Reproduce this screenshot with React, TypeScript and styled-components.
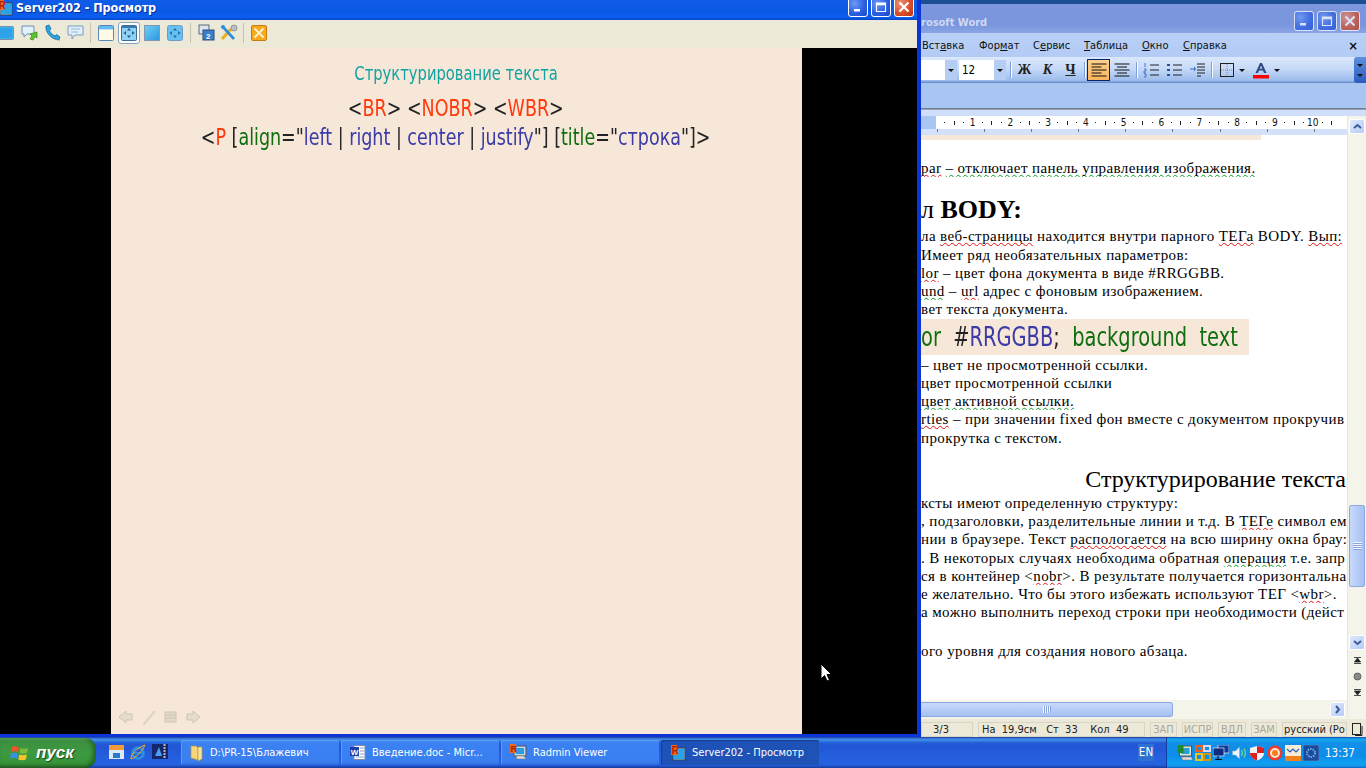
import React from 'react';
import styled, { createGlobalStyle } from 'styled-components';

const GlobalStyle = createGlobalStyle`
  html, body { margin: 0; padding: 0; height: 100%; overflow: hidden; background: #000; }
  #root { height: 100%; }
  * { box-sizing: border-box; }
`;

const UI_FONT = `"DejaVu Sans Condensed", "DejaVu Sans", sans-serif`;
const DOC_FONT = `"Liberation Serif", serif`;

const Screen = styled.div`
  width: 1366px;
  height: 768px;
  display: flex;
  flex-direction: column;
  overflow: hidden;
  position: relative;
`;

const Desktop = styled.div`
  height: 737px;
  display: flex;
`;

/* ---------- viewer window ---------- */

const Viewer = styled.div`
  width: 921px;
  flex: none;
  display: flex;
  flex-direction: column;
  border-right: 4px solid #0a36d8;
  border-bottom: 3px solid #0a36d8;
  background: #000;
`;

const ViewerTitle = styled.div`
  height: 20px;
  flex: none;
  display: flex;
  align-items: flex-start;
  padding-right: 3px;
  background: linear-gradient(180deg, #0f5ee8 0%, #0a58e4 60%, #0d5ff0 85%, #0546c8 100%);
  overflow: hidden;
`;

const TitleIcon = styled.div`
  width: 14px;
  height: 16px;
  margin-left: -3px;
  margin-right: 5px;
  flex: none;
`;

const ViewerCaption = styled.div`
  flex: 1;
  font: bold 12.5px ${UI_FONT};
  line-height: 15px;
  color: #fff;
  text-shadow: 1px 1px 0 #0a2f9c;
  letter-spacing: -0.05px;
`;

const WinButtons = styled.div<{ $faded?: boolean }>`
  display: flex;
  gap: 3px;
  margin-top: ${p => (p.$faded ? '0' : '-3px')};
  opacity: ${p => (p.$faded ? 0.72 : 1)};
`;

const WinBtn = styled.div<{ $close?: boolean }>`
  width: 20px;
  height: 20px;
  border: 1px solid #fff;
  border-radius: 3px;
  display: flex;
  align-items: center;
  justify-content: center;
  background: ${p =>
    p.$close
      ? 'radial-gradient(circle at 30% 30%, #e9937a, #d9502a 55%, #b93412)'
      : 'radial-gradient(circle at 30% 30%, #6f9af5, #2c60e4 55%, #1c48c8)'};
`;

const ViewerTools = styled.div`
  height: 28px;
  flex: none;
  background: #ece9d8;
  display: flex;
  align-items: center;
  padding-bottom: 3px;
`;

const ToolSlot = styled.div<{ $x: number; $on?: boolean }>`
  width: 22px;
  height: 22px;
  flex: none;
  margin-left: ${p => p.$x}px;
  display: flex;
  align-items: center;
  justify-content: center;
  border: ${p => (p.$on ? '1px solid #8aa4c8' : '1px solid transparent')};
  border-radius: 3px;
  background: ${p => (p.$on ? '#fff' : 'transparent')};
`;

const ToolSep = styled.div<{ $x: number }>`
  width: 1px;
  height: 20px;
  flex: none;
  margin-left: ${p => p.$x}px;
  background: #c5c2b0;
`;

const Stage = styled.div`
  flex: 1;
  display: flex;
  justify-content: center;
  padding-right: 4px;
  background: #000;
`;

const Slide = styled.div`
  width: 691px;
  margin-left: -1px;
  background: #f6e7d8;
  display: flex;
  flex-direction: column;
  align-items: center;
  padding-top: 13px;
  font-family: ${UI_FONT};
  filter: blur(0.25px);
`;

const SlideTitle = styled.div`
  font-size: 19.5px;
  line-height: 26px;
  color: #12a3a0;
  margin-bottom: 7px;
  transform: scaleX(0.84);
`;

const SlideLine = styled.div`
  font-size: 22.5px;
  line-height: 29px;
  color: #222;
  white-space: pre;
  transform: scaleX(0.865);
`;

const Tag = styled.span<{ $tone: 'red' | 'green' | 'blue' }>`
  color: ${p => (p.$tone === 'red' ? '#ff3a0c' : p.$tone === 'green' ? '#0f6e0f' : '#3a3aa8')};
`;

const SlideNav = styled.div`
  margin-top: auto;
  align-self: flex-start;
  display: flex;
  gap: 7px;
  padding: 0 0 9px 7px;
`;

/* ---------- word window ---------- */

const Word = styled.div`
  flex: 1;
  min-width: 0;
  display: flex;
  flex-direction: column;
  background: #fff;
`;

const WordTitle = styled.div`
  height: 33px;
  flex: none;
  border-top: 4px solid #1c4f92;
  display: flex;
  align-items: center;
  padding: 5px 6px 0 0;
  background: linear-gradient(180deg, #7c97dc 0%, #7995dd 70%, #8aa5e6 100%);
`;

const WordCaption = styled.div`
  flex: 1;
  font: bold 11px ${UI_FONT};
  color: #cfd9f2;
  padding-top: 2px;
`;

const MenuBar = styled.div`
  height: 24px;
  flex: none;
  display: flex;
  align-items: center;
  background: linear-gradient(180deg, #b9d1f7, #b3cbf5);
  font: 11px ${UI_FONT};
  color: #111;
  padding: 1px 0 0 1px;
  position: relative;
`;

const MenuItem = styled.span<{ $w: number }>`
  width: ${p => p.$w}px;
  flex: none;
  letter-spacing: 0.05px;
  u { text-underline-offset: 1px; }
`;

const MenuClose = styled.span`
  margin-left: auto;
  margin-right: 8px;
  font: bold 13px ${UI_FONT};
  color: #111;
`;

const FormatBar = styled.div`
  height: 26px;
  flex: none;
  display: flex;
  align-items: center;
  background: linear-gradient(180deg, #dbe8fc 0%, #c6d9f8 45%, #9dbdec 90%, #5f86c9 100%);
  position: relative;
`;

const Combo = styled.div<{ $w: number }>`
  width: ${p => p.$w}px;
  height: 20px;
  flex: none;
  margin-right: 2px;
  background: #fff;
  display: flex;
  align-items: center;
  justify-content: space-between;
  font: 11.5px ${UI_FONT};
  padding-left: 3px;
`;

const ComboArrow = styled.div`
  width: 12px;
  height: 20px;
  background: #b6cdf3;
  display: flex;
  align-items: center;
  justify-content: center;
`;

const Caret = styled.span`
  width: 0;
  height: 0;
  border: 3px solid transparent;
  border-top: 3px solid #111;
  border-bottom: none;
  flex: none;
`;

const BarSep = styled.div<{ $wide?: boolean }>`
  width: 1px;
  height: 16px;
  flex: none;
  margin: 0 ${p => (p.$wide ? '3px' : '2px')};
  background: #7f9fd6;
  box-shadow: 1px 0 0 #fff;
`;

const FmtBtn = styled.div<{ $on?: boolean; $w?: number }>`
  width: ${p => p.$w ?? 23}px;
  height: 22px;
  flex: none;
  display: flex;
  align-items: center;
  justify-content: center;
  gap: 5px;
  border: ${p => (p.$on ? '1px solid #0a246a' : '1px solid transparent')};
  background: ${p => (p.$on ? 'linear-gradient(180deg,#fdd08c,#fbb65c)' : 'transparent')};
`;

const FmtLetter = styled.span<{ $italic?: boolean; $under?: boolean }>`
  font: bold 14px ${DOC_FONT};
  font-style: ${p => (p.$italic ? 'italic' : 'normal')};
  text-decoration: ${p => (p.$under ? 'underline' : 'none')};
  color: #222;
`;

const Chevron = styled.div`
  position: absolute;
  right: 0;
  top: 0;
  width: 12px;
  height: 100%;
  background: linear-gradient(180deg, #5f8fdc, #2a5cc0);
  border-radius: 3px 0 0 3px;
  display: flex;
  flex-direction: column;
  align-items: center;
  justify-content: space-around;
  padding: 3px 0;
`;

const TaskBand = styled.div`
  height: 25px;
  flex: none;
  background: #a9c5f2;
`;

const BandEdge = styled.div`
  height: 2px;
  flex: none;
  background: linear-gradient(180deg, #5f6a7a, #aab4c4);
`;

const RulerTop = styled.div`
  height: 6px;
  flex: none;
  background: #cfdffa;
`;

const WordBody = styled.div`
  flex: 1;
  min-height: 0;
  display: flex;
`;

const DocColumn = styled.div`
  flex: 1;
  min-width: 0;
  display: flex;
  flex-direction: column;
`;

const Ruler = styled.div`
  height: 13px;
  flex: none;
  display: flex;
  background: #a9c5f2;
  overflow: hidden;
`;

const RulerWhite = styled.div`
  margin-left: 15px;
  flex: 1;
  display: flex;
  padding-left: 3px;
  background: #fff;
  font: 10px ${UI_FONT};
  color: #111;
  overflow: hidden;
`;

const RulerCell = styled.div`
  width: 37.8px;
  flex: none;
  display: flex;
  align-items: center;
  gap: 8.5px;
  padding-left: 5px;
`;

const RulerDot = styled.span`
  width: 1px;
  height: 1px;
  flex: none;
  background: #222;
`;

const RulerTick = styled.span`
  width: 1px;
  height: 4px;
  flex: none;
  background: #222;
`;

const RulerNum = styled.span`
  width: 8px;
  margin-left: -4px;
  flex: none;
  display: flex;
  justify-content: center;
  white-space: nowrap;
`;

const TabStrip = styled.div`
  height: 6px;
  flex: none;
  background: #d3e1fb;
  background-image: repeating-linear-gradient(90deg, #777 0 1px, transparent 1px 47.1px);
  background-size: 100% 3px;
  background-repeat: no-repeat;
  background-position: 16px 0;
`;

const Page = styled.div`
  flex: 1;
  min-height: 0;
  overflow: hidden;
  background: #fff;
`;

const BeigeStrip = styled.div`
  width: 340px;
  height: 5px;
  background: #f6e7d8;
`;

const Line = styled.div<{ $top?: number }>`
  height: 18.25px;
  margin-top: ${p => p.$top ?? 0}px;
  font: 15px/18.25px ${DOC_FONT};
  letter-spacing: 0.4px;
  color: #000;
  white-space: pre;
  overflow: hidden;
`;

const BodyHeading = styled.div`
  height: 30px;
  margin-top: 18px;
  font: 26px/30px ${DOC_FONT};
  white-space: pre;
  color: #000;
`;

const SectionHeading = styled.div`
  height: 26px;
  margin-top: 19px;
  padding-right: 1px;
  text-align: right;
  font: 24px/26px ${DOC_FONT};
  white-space: pre;
  color: #000;
`;

const Pasted = styled.div`
  width: 328px;
  height: 36px;
  background: #f6e7d8;
  color: #222;
  filter: blur(0.25px);
`;

const PastedText = styled.div`
  width: 410px;
  font: 27px/36px ${UI_FONT};
  white-space: pre;
  transform: scaleX(0.8);
  transform-origin: left center;
`;

const Squiggle = styled.span<{ $tone: 'red' | 'green' }>`
  text-decoration: underline wavy ${p => (p.$tone === 'red' ? '#e01010' : '#0f9a2a')} 1px;
  text-decoration-skip-ink: none;
  text-underline-offset: 1px;
`;

const HScroll = styled.div`
  height: 18px;
  flex: none;
  display: flex;
  align-items: center;
  background: #f5f4ea;
  padding: 1px 2px 0 0;
`;

const HThumb = styled.div`
  width: 252px;
  height: 15px;
  background: linear-gradient(180deg, #c8d9fb, #b4cbf7 60%, #a6c0f2);
  border: 1px solid #8ea9e0;
  border-left: none;
  border-radius: 0 3px 3px 0;
  display: flex;
  align-items: center;
  justify-content: center;
`;

const Grip = styled.div<{ $vertical?: boolean }>`
  width: ${p => (p.$vertical ? '9px' : '8px')};
  height: ${p => (p.$vertical ? '8px' : '7px')};
  background: ${p =>
    p.$vertical
      ? 'repeating-linear-gradient(180deg, #f0f5ff 0 1px, #8aa6dc 1px 2px)'
      : 'repeating-linear-gradient(90deg, #f0f5ff 0 1px, #8aa6dc 1px 2px)'};
`;

const ScrollBtn = styled.div<{ $end?: boolean }>`
  width: ${p => (p.$end ? '15px' : '16px')};
  height: 15px;
  flex: none;
  margin-left: ${p => (p.$end ? 'auto' : '0')};
  border: 1px solid #fff;
  border-radius: 2px;
  background: linear-gradient(135deg, #dfe9fd, #b6cbf6);
  display: flex;
  align-items: center;
  justify-content: center;
`;

const VScroll = styled.div`
  width: 19px;
  flex: none;
  display: flex;
  flex-direction: column;
  align-items: center;
  background: #f5f4ea;
  padding-top: 3px;
  border-left: 1px solid #e8e6d8;
`;

const VThumb = styled.div`
  width: 16px;
  height: 82px;
  margin-top: 371px;
  background: linear-gradient(90deg, #c8d9fb, #b4cbf7 60%, #a6c0f2);
  border: 1px solid #8ea9e0;
  border-radius: 2px;
  display: flex;
  align-items: center;
  justify-content: center;
`;

const VDown = styled.div`
  margin-top: 48px;
`;

const BrowseBtn = styled.div`
  width: 11px;
  height: 11px;
  margin-top: 5px;
  display: flex;
  align-items: center;
  justify-content: center;
`;

const StatusBar = styled.div`
  height: 19px;
  flex: none;
  display: flex;
  align-items: flex-end;
  gap: 5px;
  background: #ece9d8;
  border-top: 1px solid #f5f4ea;
  font: 11px ${UI_FONT};
  color: #222;
`;

const StatusCell = styled.div<{ $w: number; $dim?: boolean; $pad?: number }>`
  width: ${p => p.$w}px;
  height: 15px;
  flex: none;
  display: flex;
  align-items: center;
  justify-content: ${p => (p.$pad === undefined ? 'center' : 'flex-start')};
  padding-left: ${p => p.$pad ?? 0}px;
  border: 1px solid #d8d5c4;
  white-space: pre;
  overflow: hidden;
  color: ${p => (p.$dim ? '#a9a899' : '#222')};
`;

/* ---------- taskbar ---------- */

const Taskbar = styled.div`
  height: 31px;
  flex: none;
  display: flex;
  align-items: center;
  background: linear-gradient(180deg, #1f2f86 0%, #3165c4 3%, #3682e5 6%, #4490e6 10%, #3883e5 12%, #2b71e0 15%, #2663da 18%, #235bd6 20%, #2258d5 23%, #2157d6 38%, #245ddb 54%, #2562df 86%, #245fdc 89%, #2158d4 92%, #1d4ec0 95%, #1941a5 98%);
  font: 11px ${UI_FONT};
  color: #fff;
`;

const StartButton = styled.div`
  width: 96px;
  height: 30px;
  flex: none;
  display: flex;
  align-items: center;
  gap: 6px;
  padding-left: 10px;
  border-radius: 0 11px 11px 0;
  background: linear-gradient(180deg, #5fa85f 0%, #3c8f3f 10%, #3d9a41 50%, #389339 85%, #2b6f2d 100%);
  box-shadow: inset -3px -1px 4px rgba(0, 40, 0, 0.45);
`;

const StartLabel = styled.span`
  font: italic bold 17px "Liberation Sans", sans-serif;
  color: #fff;
  text-shadow: 1px 1px 1px #1c4a1c;
`;

const QuickLaunch = styled.div`
  width: 85px;
  flex: none;
  display: flex;
  gap: 6px;
  padding-left: 13px;
`;

const TaskButtons = styled.div`
  display: flex;
  gap: 2px;
`;

const TaskButton = styled.div<{ $active?: boolean }>`
  width: 158px;
  height: 25px;
  flex: none;
  display: flex;
  align-items: center;
  gap: 6px;
  padding-left: 9px;
  border-radius: 2px;
  white-space: nowrap;
  overflow: hidden;
  background: ${p =>
    p.$active
      ? '#1e52b7'
      : 'linear-gradient(180deg, #4a8cf6 0%, #3c81f3 12%, #3a7ff0 85%, #2f6bdc 100%)'};
  box-shadow: ${p =>
    p.$active ? 'inset 1px 1px 1px #173f8f' : 'inset 1px 1px 0 #5c9af8'};
`;

const Lang = styled.div`
  margin-left: auto;
  width: 16px;
  height: 17px;
  margin-right: 12px;
  background: #2f71d0;
  font-size: 11.5px;
  line-height: 17px;
  text-align: center;
`;

const Tray = styled.div`
  width: 200px;
  height: 100%;
  flex: none;
  display: flex;
  align-items: center;
  gap: 2px;
  padding-left: 10px;
  background: linear-gradient(180deg, #0c59b9 1%, #139ee9 6%, #18a5f0 10%, #139beb 14%, #1290e8 19%, #0d8dea 63%, #0d9ff1 81%, #0f9eed 88%, #119be9 91%, #1392e2 94%, #137ed7 97%, #095bc9 100%);
  border-left: 1px solid #0f3e9c;
`;

const Clock = styled.span`
  margin-left: 4px;
  font-size: 11.5px;
`;

const Cursor = styled.svg`
  position: absolute;
  left: 820px;
  top: 663px;
`;

/* ---------- drawings ---------- */

const MinGlyph = () => (
  <svg width="12" height="12" viewBox="0 0 12 12"><rect x="2" y="8" width="6" height="2.5" fill="#fff" /></svg>
);
const MaxGlyph = () => (
  <svg width="12" height="12" viewBox="0 0 12 12"><path d="M1.5 3V10.5H10.5V3Z M1.5 2H10.5V3.6H1.5Z" fill="none" stroke="#fff" strokeWidth="1.2" /></svg>
);
const CloseGlyph = () => (
  <svg width="12" height="12" viewBox="0 0 12 12"><path d="M1.5 1.5L10.5 10.5M10.5 1.5L1.5 10.5" stroke="#fff" strokeWidth="2.2" /></svg>
);

const RadminIcon = () => (
  <svg width="16" height="16" viewBox="0 0 16 16">
    <rect x="3" y="3" width="12" height="12" fill="#8fd0f4" stroke="#345" />
    <rect x="4" y="4" width="10" height="10" fill="#2aa2e6" />
    <rect x="1" y="0" width="6" height="10" fill="#f0681a" />
    <text x="1.5" y="9" fontSize="10" fontWeight="bold" fontFamily="Liberation Sans" fill="#b02000">R</text>
  </svg>
);

const IconBlueScreen = () => (
  <svg width="16" height="14" viewBox="0 0 16 14"><rect x=".5" y=".5" width="15" height="13" rx="1" fill="#3db4ee" stroke="#7a8ea8" /><rect x="2" y="2" width="12" height="10" fill="#2ea3e8" /></svg>
);
const IconChatArrow = () => (
  <svg width="17" height="17" viewBox="0 0 17 17">
    <path d="M1 2H13V10H6L3 13V10H1Z" fill="#e4f1fb" stroke="#6f8fb3" />
    <path d="M16 8L9 10L11 12L9 15L12 16L14 12.5L16 14Z" fill="#5fc42e" stroke="#2e8a14" strokeWidth=".7" />
  </svg>
);
const IconPhone = () => (
  <svg width="17" height="17" viewBox="0 0 17 17">
    <path d="M2 2L5 1L7 5L5.5 6.5C6.5 9 8.5 11 11 12L12.5 10.5L16 13L15 15.5C9 16.5 1 9 2 2Z" fill="#2ca4dc" stroke="#146a9c" strokeWidth=".8" />
    <path d="M13 16H16" stroke="#888" strokeDasharray="1 1" />
  </svg>
);
const IconChat = () => (
  <svg width="17" height="17" viewBox="0 0 17 17">
    <path d="M1 2H16V11H8L5 15V11H1Z" fill="#dff0fb" stroke="#7c9bbd" />
    <path d="M4 5H13M4 8H11" stroke="#9ab7d2" />
  </svg>
);
const IconWindow = () => (
  <svg width="16" height="16" viewBox="0 0 16 16"><rect x=".5" y=".5" width="15" height="15" rx="1" fill="#fdfbe8" stroke="#5b87b5" /><rect x="1" y="1" width="14" height="3" fill="#5fbcf0" /><rect x="1" y="4" width="14" height="1" fill="#c6def0" /></svg>
);
const FullArrows = ({ fill }: { fill: string }) => (
  <path d="M8 3L10 5.5H6Z M8 13L6 10.5H10Z M2.5 8L5 6V10Z M13.5 8L11 10V6Z" fill={fill} />
);
const IconFullscreen = () => (
  <svg width="16" height="16" viewBox="0 0 16 16"><rect x=".5" y=".5" width="15" height="15" rx="1" fill="#8fd2f4" stroke="#3a6c98" /><rect x="1" y="1" width="14" height="2" fill="#3a7ab0" /><FullArrows fill="#1c5c92" /></svg>
);
const IconSquare = () => (
  <svg width="16" height="16" viewBox="0 0 16 16"><defs><linearGradient id="sq" x1="0" y1="0" x2="1" y2="1"><stop offset="0" stopColor="#6ed0f6" /><stop offset="1" stopColor="#2a96e0" /></linearGradient></defs><rect x=".5" y=".5" width="15" height="15" fill="url(#sq)" stroke="#7f98b0" /></svg>
);
const IconSquareArrows = () => (
  <svg width="16" height="16" viewBox="0 0 16 16"><rect x=".5" y=".5" width="15" height="15" rx="2" fill="#66c0f0" stroke="#6f9cc4" /><FullArrows fill="#1c6ca8" /></svg>
);
const IconTwoScreens = () => (
  <svg width="17" height="17" viewBox="0 0 17 17"><rect x="1" y="1" width="10" height="9" fill="#dde5ee" stroke="#5a6c80" /><rect x="5" y="6" width="11" height="10" fill="#3a7fc8" stroke="#2a4e78" /><text x="8" y="14.5" fontSize="8" fontWeight="bold" fontFamily="Liberation Sans" fill="#fff">2</text></svg>
);
const IconTools = () => (
  <svg width="18" height="18" viewBox="0 0 18 18">
    <path d="M2 15L11 5" stroke="#f0b020" strokeWidth="3.2" />
    <path d="M12 2L15 5" stroke="#9aa4ac" strokeWidth="3" />
    <path d="M3 3L14 15" stroke="#2a8ed8" strokeWidth="2.6" />
    <circle cx="3" cy="3" r="2" fill="#2a8ed8" />
    <circle cx="14" cy="4" r="3" fill="#b8bfc6" stroke="#6c747c" strokeWidth=".6" />
  </svg>
);
const IconOrangeX = () => (
  <svg width="16" height="16" viewBox="0 0 16 16"><rect x=".5" y=".5" width="15" height="15" rx="1.5" fill="#f8a91c" stroke="#c87a10" /><path d="M3.5 3.5L12.5 12.5M12.5 3.5L3.5 12.5" stroke="#fff3d0" strokeWidth="1.8" /></svg>
);

const NavBack = () => (
  <svg width="16" height="16" viewBox="0 0 16 16"><path d="M1 8L8 2V5H14V11H8V14Z" fill="#e6dccb" stroke="#cfc5b4" /></svg>
);
const NavPen = () => (
  <svg width="16" height="16" viewBox="0 0 16 16"><path d="M2 15L13 2L14 3L4 15Z" fill="#e6dccb" stroke="#d2c8b7" strokeWidth=".7" /></svg>
);
const NavMenu = () => (
  <svg width="14" height="16" viewBox="0 0 14 16"><rect x="1" y="3" width="11" height="10" fill="#e4d9c8" stroke="#cfc5b4" /><path d="M1 6H12M1 9H12" stroke="#cfc5b4" /></svg>
);
const NavNext = () => (
  <svg width="16" height="16" viewBox="0 0 16 16"><path d="M15 8L8 2V5H2V11H8V14Z" fill="#e6dccb" stroke="#cfc5b4" /></svg>
);

const AlignIcon = ({ center }: { center?: boolean }) => (
  <svg width="16" height="14" viewBox="0 0 16 14">
    {[1, 4, 7, 10, 13].map((y, i) => {
      const w = !center && i % 2 ? 10 : 15;
      const x = center && i % 2 ? 3 : 0.5;
      return <rect key={y} x={x} y={y - 0.5} width={center && i % 2 ? 10 : w} height="1" fill="#111" />;
    })}
  </svg>
);
const NumList = () => (
  <svg width="17" height="15" viewBox="0 0 17 15">
    <path d="M7 2H16M7 7H16M7 12H16" stroke="#222" />
    <path d="M2 0V4M1 6H3V8H1V10H3M1 11H3V14H1" stroke="#3a6cc8" fill="none" strokeWidth=".9" />
  </svg>
);
const BulletList = () => (
  <svg width="17" height="15" viewBox="0 0 17 15">
    <path d="M7 2H16M7 7H16M7 12H16" stroke="#222" />
    <path d="M1 1H4V3H1ZM1 6H4V8H1ZM1 11H4V13H1Z" fill="#2b4e9a" />
  </svg>
);
const IndentIcon = () => (
  <svg width="17" height="15" viewBox="0 0 17 15">
    <path d="M8 1H16M8 4H16M8 7H16M8 10H16M8 13H12" stroke="#222" />
    <path d="M1 5.5H5V3.5L7 6L5 8.5V6.5H1Z" fill="#3a6cc8" />
  </svg>
);
const BordersIcon = () => (
  <svg width="14" height="14" viewBox="0 0 14 14">
    <rect x=".5" y=".5" width="13" height="13" fill="none" stroke="#222" />
    <path d="M7 1V13M1 7H13" stroke="#8a8a8a" strokeDasharray="1 1" />
  </svg>
);
const FontColor = () => (
  <svg width="16" height="17" viewBox="0 0 16 17">
    <path d="M2.5 11L7 1H9L13.5 11H11L10 8.5H6L5 11ZM6.8 6.7H9.2L8 3.6Z" fill="#2e4a80" />
    <rect x="0" y="13" width="16" height="3.5" fill="#f00" />
  </svg>
);

const ArrowUp = () => (
  <svg width="9" height="7" viewBox="0 0 9 7"><path d="M1 5L4.5 2L8 5" fill="none" stroke="#3a5c98" strokeWidth="2" /></svg>
);
const ArrowDown = () => (
  <svg width="9" height="7" viewBox="0 0 9 7"><path d="M1 2L4.5 5L8 2" fill="none" stroke="#3a5c98" strokeWidth="2" /></svg>
);
const ArrowRight = () => (
  <svg width="7" height="9" viewBox="0 0 7 9"><path d="M2 1L5 4.5L2 8" fill="none" stroke="#3a5c98" strokeWidth="2" /></svg>
);
const BrowseUp = () => (
  <svg width="9" height="9" viewBox="0 0 9 9"><path d="M1 1.5H8M4.5 2L7.5 6H1.5Z M1 7.5H8" stroke="#222" fill="#222" strokeWidth=".8" /></svg>
);
const BrowseDot = () => (
  <svg width="9" height="9" viewBox="0 0 9 9"><circle cx="4.5" cy="4.5" r="3.5" fill="#8a8a8a" stroke="#444" strokeWidth=".7" /></svg>
);
const BrowseDown = () => (
  <svg width="9" height="9" viewBox="0 0 9 9"><path d="M1 1.5H8M4.5 7L7.5 3H1.5Z M1 7.5H8" stroke="#222" fill="#222" strokeWidth=".8" /></svg>
);

const PagesIcon = () => (
  <svg width="11" height="14" viewBox="0 0 11 14"><rect x=".5" y=".5" width="8" height="11" fill="#ece9d8" stroke="#222" /><path d="M3 12.5H10V3" fill="none" stroke="#222" /></svg>
);

const WinFlag = () => (
  <svg width="20" height="20" viewBox="0 0 20 20">
    <path d="M2 4C4 3 6 3 9 4.5L8 9.5C6 8 4 8 1 9Z" fill="#e8562a" />
    <path d="M10.5 5C13 6 15 6 18 5L17 10C14.5 11 12 11 9.5 10Z" fill="#7cbc3a" />
    <path d="M1 10.5C3.5 9.5 5.5 9.5 8 11L7 16C5 14.5 3 14.5 0 15.5Z" fill="#3a8ee8" />
    <path d="M9.3 11.5C12 12.5 14 12.5 16.8 11.5L16 16.5C13 17.5 11 17.5 8.3 16.5Z" fill="#f8c62a" />
  </svg>
);
const QuickFolder = () => (
  <svg width="15" height="16" viewBox="0 0 15 16"><rect x="0" y="1" width="15" height="5" fill="#f09a3a" /><rect x="0" y="6" width="15" height="9" fill="#dbe9f8" /><rect x="4" y="9" width="7" height="5" fill="#2a7ac8" /></svg>
);
const QuickIE = () => (
  <svg width="16" height="17" viewBox="0 0 16 17">
    <circle cx="8" cy="9" r="5.5" fill="none" stroke="#2f8ee0" strokeWidth="2.6" />
    <path d="M3 9H13" stroke="#2f8ee0" strokeWidth="1.8" />
    <path d="M1 15C0 12 6 4 15 1C13 6 6 14 1 15Z" fill="none" stroke="#f0b020" strokeWidth="1" />
  </svg>
);
const QuickMedia = () => (
  <svg width="16" height="15" viewBox="0 0 16 15"><rect width="16" height="15" fill="#16266a" /><path d="M3 12L7 3L10 12Z" fill="#4aa0f0" /><path d="M12.5 0V15" stroke="#bbb" strokeDasharray="2 1" strokeWidth="2" /></svg>
);
const FolderIcon = () => (
  <svg width="14" height="18" viewBox="0 0 14 18"><path d="M1 2H6L8 4V16L1 14Z" fill="#f5d67a" stroke="#b89838" strokeWidth=".7" /><path d="M8 3H12V15L8 17Z" fill="#f7e39c" stroke="#b89838" strokeWidth=".7" /></svg>
);
const WordDocIcon = () => (
  <svg width="16" height="16" viewBox="0 0 16 16"><rect x="4" y="0.5" width="11" height="14" fill="#fff" stroke="#7a8aa8" /><path d="M10 3H14M10 6H14M10 9H14M6 12H14" stroke="#8a9cc0" /><rect x="0" y="2" width="9" height="9" fill="#1e3fa8" /><text x="0.8" y="9.5" fontSize="8" fontWeight="bold" fontFamily="Liberation Sans" fill="#fff">W</text></svg>
);
const ViewerTaskIcon = () => (
  <svg width="17" height="17" viewBox="0 0 17 17">
    <rect x="4" y="2" width="12" height="10" fill="#bcd8ea" stroke="#555" />
    <rect x="6" y="4" width="8" height="6" fill="#2a9ce0" />
    <path d="M6 12H14L16 15H7Z" fill="#ddd" stroke="#777" strokeWidth=".6" />
    <rect x="0" y="0" width="6" height="9" fill="#f0681a" />
    <text x="0.5" y="8" fontSize="9" fontWeight="bold" fontFamily="Liberation Sans" fill="#a81c00">R</text>
  </svg>
);

const TrayRadmin = () => (
  <svg width="16" height="16" viewBox="0 0 15 16"><rect x="2" y="1" width="12" height="10" fill="#d8e8d8" stroke="#555" /><rect x="4" y="3" width="8" height="6" fill="#2aa0d0" /><rect x="0" y="0" width="6" height="8" fill="#1f8a2e" /><path d="M4 12H14L15 15H5Z" fill="#ddd" stroke="#777" strokeWidth=".5" /></svg>
);
const TrayBlocks = () => (
  <svg width="16" height="16" viewBox="0 0 16 16"><g fill="none" strokeWidth="2"><rect x="1" y="1" width="6" height="5" stroke="#f0601a" /><rect x="9" y="1" width="6" height="5" stroke="#d8d8f0" /><rect x="1" y="9" width="6" height="6" stroke="#f0c020" /><rect x="9" y="9" width="6" height="6" stroke="#c89820" /></g></svg>
);
const TrayNet = () => (
  <svg width="16" height="16" viewBox="0 0 16 16"><rect x="5" y="0" width="11" height="8" fill="#0c3a9c" stroke="#e8f0ff" strokeWidth=".7" /><rect x="0" y="3" width="11" height="8" fill="#0c2a80" stroke="#e8f0ff" strokeWidth=".7" /><path d="M5 11V14M2 14.5H9" stroke="#111" strokeWidth="1.2" /></svg>
);
const TraySound = () => (
  <svg width="16" height="16" viewBox="0 0 15 16"><path d="M1 6H4L8 2V14L4 10H1Z" fill="#eef4fb" stroke="#8aa" strokeWidth=".5" /><path d="M10 5C11 7 11 9 10 11M12.5 3.5C14 6 14 10 12.5 12.5" fill="none" stroke="#7ee07e" strokeWidth="1.2" /></svg>
);
const TrayShield = () => (
  <svg width="16" height="16" viewBox="0 0 16 16"><path d="M8 1L15 3V8C15 12 11 14.5 8 15.5C5 14.5 1 12 1 8V3Z" fill="#f2f2f2" /><path d="M8 1L15 3V8H8ZM8 8V15.5C5 14.5 1 12 1 8Z" fill="#e02020" /></svg>
);
const TrayTarget = () => (
  <svg width="16" height="16" viewBox="0 0 16 16"><circle cx="8" cy="8" r="7.5" fill="#f03a2a" /><circle cx="8" cy="8" r="5" fill="#fbe4d0" /><circle cx="8" cy="8" r="3" fill="#f0801a" /></svg>
);
const TrayMail = () => (
  <svg width="16" height="16" viewBox="0 0 16 16"><rect width="16" height="16" fill="#f5ecd8" /><path d="M2 4L5 7L8 4L11 7L14 4" fill="none" stroke="#2a5cb8" strokeWidth="1.2" /><rect y="11" width="16" height="5" fill="#f0801a" /></svg>
);
const TrayDots = () => (
  <svg width="16" height="16" viewBox="0 0 16 16"><rect width="16" height="16" rx="1" fill="#1c4a9c" stroke="#8ab" strokeWidth=".5" /><circle cx="8" cy="8" r="4" fill="none" stroke="#6ab0e8" strokeWidth="2" strokeDasharray="1.5 1" /></svg>
);

const rulerMarks = [1, 2, 3, 4, 5, 6, 7, 8, 9, 10];

export default function App() {
  return (
    <Screen>
      <GlobalStyle />
      <Desktop>
        <Viewer>
          <ViewerTitle>
            <TitleIcon><RadminIcon /></TitleIcon>
            <ViewerCaption>Server202 - Просмотр</ViewerCaption>
            <WinButtons>
              <WinBtn><MinGlyph /></WinBtn>
              <WinBtn><MaxGlyph /></WinBtn>
              <WinBtn $close><CloseGlyph /></WinBtn>
            </WinButtons>
          </ViewerTitle>
          <ViewerTools>
            <ToolSlot $x={-5}><IconBlueScreen /></ToolSlot>
            <ToolSlot $x={1}><IconChatArrow /></ToolSlot>
            <ToolSlot $x={1}><IconPhone /></ToolSlot>
            <ToolSlot $x={1}><IconChat /></ToolSlot>
            <ToolSep $x={4} />
            <ToolSlot $x={4}><IconWindow /></ToolSlot>
            <ToolSlot $x={1} $on><IconFullscreen /></ToolSlot>
            <ToolSlot $x={1}><IconSquare /></ToolSlot>
            <ToolSlot $x={1}><IconSquareArrows /></ToolSlot>
            <ToolSep $x={4} />
            <ToolSlot $x={4}><IconTwoScreens /></ToolSlot>
            <ToolSlot $x={1}><IconTools /></ToolSlot>
            <ToolSep $x={3} />
            <ToolSlot $x={4}><IconOrangeX /></ToolSlot>
          </ViewerTools>
          <Stage>
            <Slide>
              <SlideTitle>Структурирование текста</SlideTitle>
              <SlideLine>
                {'<'}<Tag $tone="red">BR</Tag>{'> <'}<Tag $tone="red">NOBR</Tag>{'> <'}<Tag $tone="red">WBR</Tag>{'>'}
              </SlideLine>
              <SlideLine>
                {'<'}<Tag $tone="red">P</Tag>{' ['}<Tag $tone="green">align</Tag>{'="'}
                <Tag $tone="blue">left</Tag>{' | '}<Tag $tone="blue">right</Tag>{' | '}
                <Tag $tone="blue">center</Tag>{' | '}<Tag $tone="blue">justify</Tag>{'"] ['}
                <Tag $tone="green">title</Tag>{'="'}<Tag $tone="blue">строка</Tag>{'"]>'}
              </SlideLine>
              <SlideNav>
                <NavBack /><NavPen /><NavMenu /><NavNext />
              </SlideNav>
            </Slide>
          </Stage>
        </Viewer>

        <Word>
          <WordTitle>
            <WordCaption>rosoft Word</WordCaption>
            <WinButtons $faded>
              <WinBtn><MinGlyph /></WinBtn>
              <WinBtn><MaxGlyph /></WinBtn>
              <WinBtn $close><CloseGlyph /></WinBtn>
            </WinButtons>
          </WordTitle>
          <MenuBar>
            <MenuItem $w={57}>Вст<u>а</u>вка</MenuItem>
            <MenuItem $w={54}>Фор<u>м</u>ат</MenuItem>
            <MenuItem $w={51}>С<u>е</u>рвис</MenuItem>
            <MenuItem $w={58}><u>Т</u>аблица</MenuItem>
            <MenuItem $w={41}><u>О</u>кно</MenuItem>
            <MenuItem $w={50}><u>С</u>правка</MenuItem>
            <MenuClose>×</MenuClose>
          </MenuBar>
          <FormatBar>
            <Combo $w={36}><span /><ComboArrow><Caret /></ComboArrow></Combo>
            <Combo $w={47}>12<ComboArrow><Caret /></ComboArrow></Combo>
            <BarSep />
            <FmtBtn><FmtLetter>Ж</FmtLetter></FmtBtn>
            <FmtBtn><FmtLetter $italic>К</FmtLetter></FmtBtn>
            <FmtBtn><FmtLetter $under>Ч</FmtLetter></FmtBtn>
            <BarSep />
            <FmtBtn $on><AlignIcon /></FmtBtn>
            <FmtBtn><AlignIcon center /></FmtBtn>
            <BarSep $wide />
            <FmtBtn><NumList /></FmtBtn>
            <FmtBtn><BulletList /></FmtBtn>
            <FmtBtn><IndentIcon /></FmtBtn>
            <BarSep />
            <FmtBtn $w={36}><BordersIcon /><Caret /></FmtBtn>
            <FmtBtn $w={32}><FontColor /><Caret /></FmtBtn>
            <Chevron>
              <Caret />
              <Caret />
            </Chevron>
          </FormatBar>
          <TaskBand />
          <BandEdge />
          <RulerTop />
          <WordBody>
            <DocColumn>
              <Ruler>
                <RulerWhite>
                  {rulerMarks.map(n => (
                    <RulerCell key={n}>
                      <RulerDot />
                      <RulerTick />
                      <RulerDot />
                      <RulerNum>{n}</RulerNum>
                    </RulerCell>
                  ))}
                  <RulerCell>
                    <RulerDot />
                    <RulerTick />
                  </RulerCell>
                </RulerWhite>
              </Ruler>
              <TabStrip />
              <Page>
                <BeigeStrip />
                <Line $top={19}>
                  <Squiggle $tone="red">par</Squiggle> <Squiggle $tone="green">– отключает панель управления изображения.</Squiggle>
                </Line>
                <BodyHeading>л <b>BODY:</b></BodyHeading>
                <Line $top={2}>
                  ла <Squiggle $tone="red">веб-страницы</Squiggle> находится внутри парного <Squiggle $tone="red">ТЕГа</Squiggle> BODY. <Squiggle $tone="red">Вып:</Squiggle>
                </Line>
                <Line>Имеет ряд необязательных параметров:</Line>
                <Line><Squiggle $tone="red">lor</Squiggle> – цвет фона документа в виде #RRGGBB.</Line>
                <Line><Squiggle $tone="green">und</Squiggle> – <Squiggle $tone="red">url</Squiggle> адрес с фоновым изображением.</Line>
                <Line>вет текста документа.</Line>
                <Pasted>
                  <PastedText>
                    <Tag $tone="green">or</Tag>{'  #'}<Tag $tone="blue">RRGGBB</Tag>{';  '}<Tag $tone="green">background</Tag>{'  '}<Tag $tone="green">text</Tag>
                  </PastedText>
                </Pasted>
                <Line $top={1}>– цвет не просмотренной ссылки.</Line>
                <Line>цвет просмотренной ссылки</Line>
                <Line><Squiggle $tone="green">цвет активной ссылки.</Squiggle></Line>
                <Line><Squiggle $tone="red">rties</Squiggle> – при значении fixed фон вместе с документом прокручив</Line>
                <Line>прокрутка с текстом.</Line>
                <SectionHeading>Структурирование текста</SectionHeading>
                <Line $top={2}>ксты имеют определенную структуру:</Line>
                <Line>, подзаголовки, разделительные линии и т.д. В <Squiggle $tone="red">ТЕГе</Squiggle> символ ем</Line>
                <Line>нии в браузере. Текст <Squiggle $tone="red">распологается</Squiggle> на всю ширину окна брау:</Line>
                <Line>. В некоторых случаях необходима обратная <Squiggle $tone="green">операция</Squiggle> т.е. запр</Line>
                <Line>ся в контейнер &lt;<Squiggle $tone="red">nobr</Squiggle>&gt;. В результате получается горизонтальна</Line>
                <Line>е желательно. Что бы этого избежать используют ТЕГ &lt;<Squiggle $tone="red">wbr</Squiggle>&gt;. </Line>
                <Line>а можно выполнить переход строки при необходимости (дейст</Line>
                <Line $top={20}>ого уровня для создания нового абзаца.</Line>
              </Page>
              <HScroll>
                <HThumb><Grip /></HThumb>
                <ScrollBtn $end><ArrowRight /></ScrollBtn>
              </HScroll>
            </DocColumn>
            <VScroll>
              <ScrollBtn><ArrowUp /></ScrollBtn>
              <VThumb><Grip $vertical /></VThumb>
              <VDown><ScrollBtn><ArrowDown /></ScrollBtn></VDown>
              <BrowseBtn><BrowseUp /></BrowseBtn>
              <BrowseBtn><BrowseDot /></BrowseBtn>
              <BrowseBtn><BrowseDown /></BrowseBtn>
            </VScroll>
          </WordBody>
          <StatusBar>
            <StatusCell $w={52} $pad={11}>3/3</StatusCell>
            <StatusCell $w={167} $pad={3}>На  19,9см   Ст  33    Кол  49</StatusCell>
            <StatusCell $w={27} $dim>ЗАП</StatusCell>
            <StatusCell $w={31} $dim>ИСПР</StatusCell>
            <StatusCell $w={28} $dim>ВДЛ</StatusCell>
            <StatusCell $w={26} $dim>ЗАМ</StatusCell>
            <StatusCell $w={65} $pad={1}>русский (Ро</StatusCell>
            <PagesIcon />
          </StatusBar>
        </Word>
      </Desktop>

      <Taskbar>
        <StartButton>
          <WinFlag />
          <StartLabel>пуск</StartLabel>
        </StartButton>
        <QuickLaunch>
          <QuickFolder />
          <QuickIE />
          <QuickMedia />
        </QuickLaunch>
        <TaskButtons>
          <TaskButton><FolderIcon />D:\PR-15\Блажевич</TaskButton>
          <TaskButton><WordDocIcon />Введение.doc - Micr...</TaskButton>
          <TaskButton><ViewerTaskIcon />Radmin Viewer</TaskButton>
          <TaskButton $active><RadminIcon />Server202 - Просмотр</TaskButton>
        </TaskButtons>
        <Lang>EN</Lang>
        <Tray>
          <TrayRadmin />
          <TrayBlocks />
          <TrayNet />
          <TraySound />
          <TrayShield />
          <TrayTarget />
          <TrayMail />
          <TrayDots />
          <Clock>13:37</Clock>
        </Tray>
      </Taskbar>

      <Cursor width="12" height="20" viewBox="0 0 12 20">
        <path d="M1 1V16L4.5 12.5L7 18L9.5 17L7 11.5H11.5Z" fill="#fff" stroke="#000" />
      </Cursor>
    </Screen>
  );
}
